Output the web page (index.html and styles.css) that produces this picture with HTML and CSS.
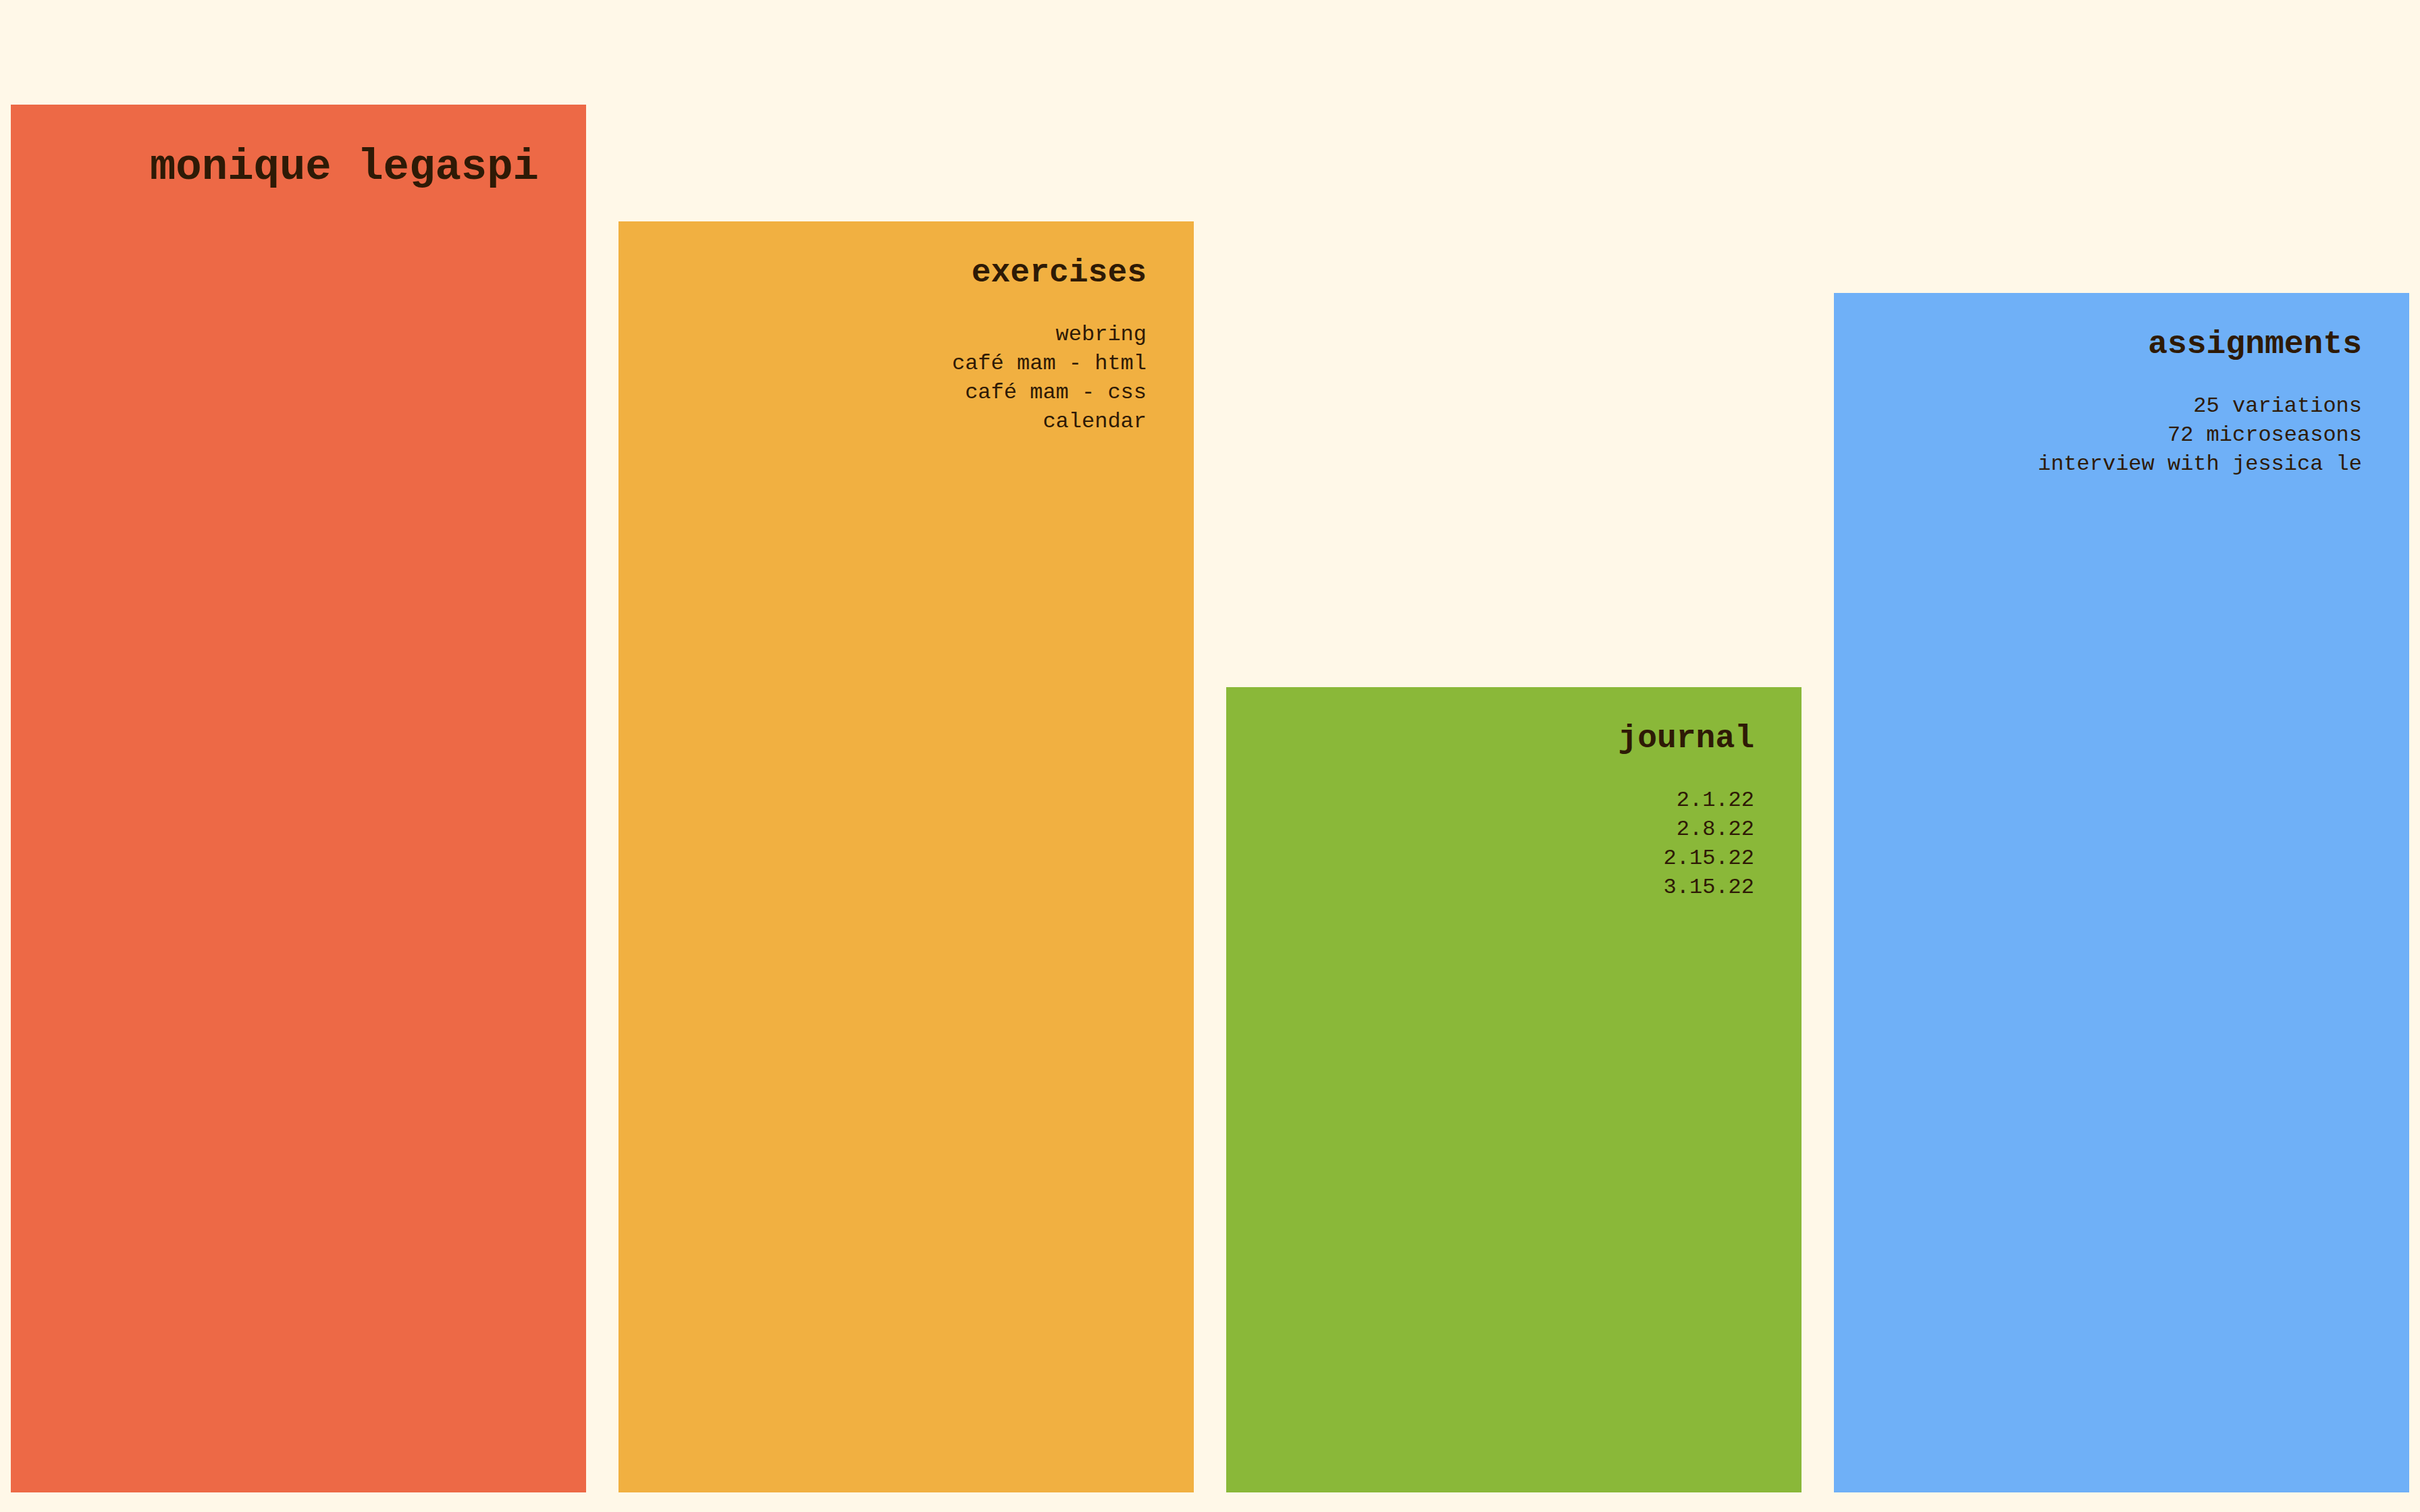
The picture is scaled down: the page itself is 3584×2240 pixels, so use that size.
FILE: index.html
```html
<!DOCTYPE html>
<html lang="en">
<head>
  <meta charset="UTF-8">
  <title>monique legaspi</title>
  <link rel="stylesheet" href="styles.css">
</head>
<body>
  <main class="columns">
    <!-- name -->
    <section class="col col-home">
      <h1>monique legaspi</h1>
    </section>

    <section class="col col-exercises">
      <h2>exercises</h2>
      <ul>
        <li><a href="#">webring</a></li>
        <li><a href="#">café mam - html</a></li>
        <li><a href="#">café mam - css</a></li>
        <li><a href="#">calendar</a></li>
      </ul>
    </section>

    <section class="col col-journal">
      <h2>journal</h2>
      <ul>
        <li><a href="#">2.1.22</a></li>
        <li><a href="#">2.8.22</a></li>
        <li><a href="#">2.15.22</a></li>
        <li><a href="#">3.15.22</a></li>
      </ul>
    </section>

    <section class="col col-assignments">
      <h2>assignments</h2>
      <ul>
        <li><a href="#">25 variations</a></li>
        <li><a href="#">72 microseasons</a></li>
        <li><a href="#">interview with jessica le</a></li>
      </ul>
    </section>
  </main>
</body>
</html>
```

FILE: styles.css
```css
html, body {
  margin: 0;
  height: 100%;
}
body {
  font-family: "Liberation Mono", "DejaVu Sans Mono", monospace;
  background-color: #fff8e8;
  color: #2e1a06;
}
.columns {
  box-sizing: border-box;
  height: 100vh;
  display: flex;
  align-items: flex-end;
  gap: 48px;
  padding: 0 16px 29px;
}
.col {
  flex: 1;
  box-sizing: border-box;
  padding: 0 70px 0 0;
  text-align: right;
}
.col-home {
  height: 2056px;
  background-color: #ed6946;
}
.col-exercises {
  height: 1883px;
  background-color: #f1b041;
}
.col-journal {
  height: 1193px;
  background-color: #8ab839;
}
.col-assignments {
  height: 1777px;
  background-color: #6fb0f7;
}
h1 {
  font-size: 64px;
  line-height: 84px;
  font-weight: bold;
  margin: 51px 0 0;
}
h2 {
  font-size: 48px;
  line-height: 64px;
  font-weight: bold;
  margin: 44px 0 38px;
}
ul {
  list-style: none;
  margin: 0;
  padding: 0;
  font-size: 32px;
  line-height: 43px;
}
a {
  color: inherit;
  text-decoration: none;
}
```
